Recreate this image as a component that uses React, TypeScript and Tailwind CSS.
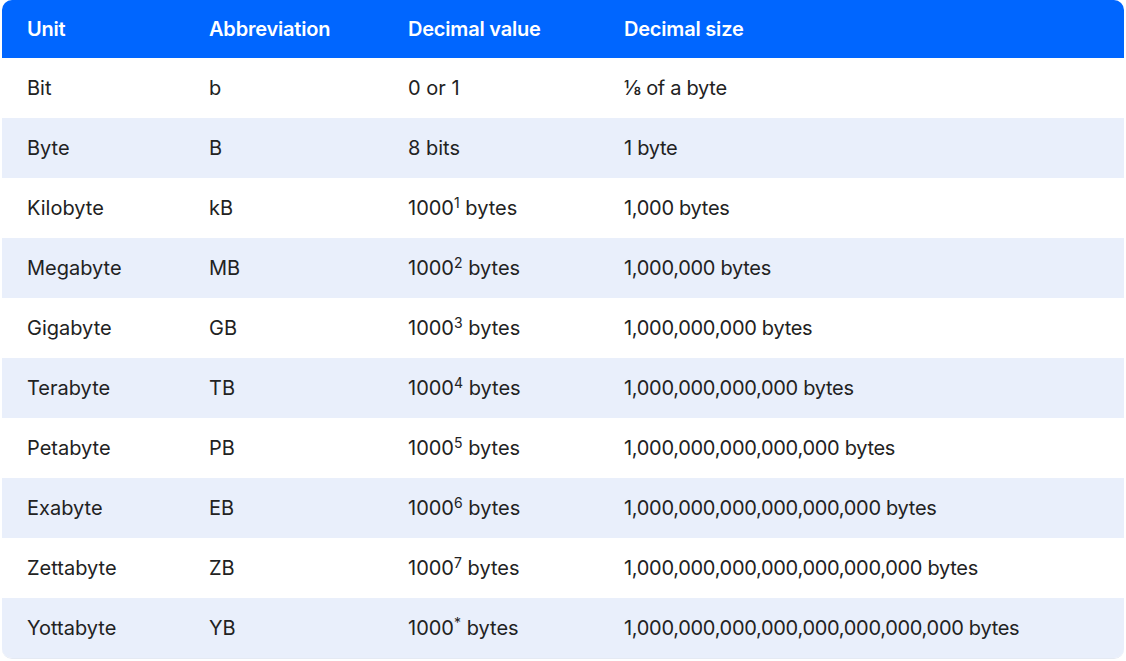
const rows: [string, string, React.ReactNode, string][] = [
  ["Bit", "b", "0 or 1", "⅛ of a byte"],
  ["Byte", "B", "8 bits", "1 byte"],
  ["Kilobyte", "kB", "1", "1,000 bytes"],
  ["Megabyte", "MB", "2", "1,000,000 bytes"],
  ["Gigabyte", "GB", "3", "1,000,000,000 bytes"],
  ["Terabyte", "TB", "4", "1,000,000,000,000 bytes"],
  ["Petabyte", "PB", "5", "1,000,000,000,000,000 bytes"],
  ["Exabyte", "EB", "6", "1,000,000,000,000,000,000 bytes"],
  ["Zettabyte", "ZB", "7", "1,000,000,000,000,000,000,000 bytes"],
  ["Yottabyte", "YB", "*", "1,000,000,000,000,000,000,000,000 bytes"],
];

export default function App() {
  return (
    <div className="w-[1126px] h-[661px] bg-white px-[2px]" style={{ fontFamily: "Inter, 'Noto Sans', sans-serif" }}>
      <div className="rounded-[10px] overflow-hidden border-b border-[#e5eaf3]">
        <div className="grid grid-cols-[182px_199px_216px_1fr] h-[58px] items-center bg-[#0066ff] text-white text-[20px] font-semibold pl-[25px] tracking-[-0.2px]">
          <div>Unit</div><div>Abbreviation</div><div>Decimal value</div><div>Decimal size</div>
        </div>
        {rows.map((r, i) => (
          <div key={i} className={`grid grid-cols-[182px_199px_216px_1fr] h-[60px] items-center text-[20px] text-[#222] pl-[25px] ${i % 2 ? "bg-[#e9effb]" : "bg-white"}`}>
            <div>{r[0]}</div>
            <div>{r[1]}</div>
            <div>{i < 2 ? r[2] : <>1000<sup className="text-[14px]">{r[2]}</sup> bytes</>}</div>
            <div className="tracking-[-0.3px]">{r[3]}</div>
          </div>
        ))}
      </div>
    </div>
  );
}
